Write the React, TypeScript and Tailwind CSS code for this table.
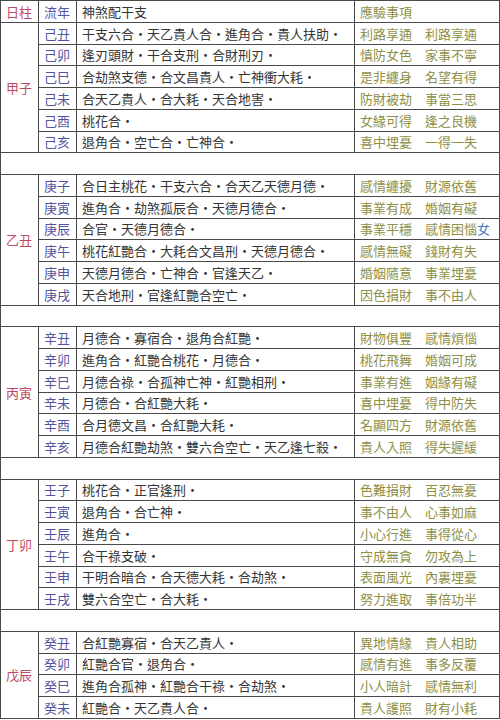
import React from 'react'

type Row = { year: string; shensha: string; result: React.ReactNode }
type Block = { pillar: string; rows: Row[] }

const blocks: Block[] = [
  {
    pillar: '甲子',
    rows: [
      { year: '己丑', shensha: '干支六合・天乙貴人合・進角合・貴人扶助・', result: '利路享通　利路享通' },
      { year: '己卯', shensha: '逢刃頭財・干合支刑・合財刑刃・', result: '慎防女色　家事不寧' },
      { year: '己巳', shensha: '合劫煞支德・合文昌貴人・亡神衝大耗・', result: '是非纏身　名望有得' },
      { year: '己未', shensha: '合天乙貴人・合大耗・天合地害・', result: '防財被劫　事當三思' },
      { year: '己酉', shensha: '桃花合・', result: '女緣可得　逢之良機' },
      { year: '己亥', shensha: '退角合・空亡合・亡神合・', result: '喜中埋憂　一得一失' },
    ],
  },
  {
    pillar: '乙丑',
    rows: [
      { year: '庚子', shensha: '合日主桃花・干支六合・合天乙天德月德・', result: '感情纏擾　財源依舊' },
      { year: '庚寅', shensha: '進角合・劫煞孤辰合・天德月德合・', result: '事業有成　婚姻有礙' },
      {
        year: '庚辰',
        shensha: '合官・天德月德合・',
        result: (
          <>
            事業平穩　感情困惱<span className="text-[#4a78b8]">女</span>
          </>
        ),
      },
      { year: '庚午', shensha: '桃花紅艷合・大耗合文昌刑・天德月德合・', result: '感情無礙　錢財有失' },
      { year: '庚申', shensha: '天德月德合・亡神合・官逢天乙・', result: '婚姻隨意　事業埋憂' },
      { year: '庚戌', shensha: '天合地刑・官逢紅艷合空亡・', result: '因色損財　事不由人' },
    ],
  },
  {
    pillar: '丙寅',
    rows: [
      { year: '辛丑', shensha: '月德合・寡宿合・退角合紅艷・', result: '財物俱豐　感情煩惱' },
      { year: '辛卯', shensha: '進角合・紅艷合桃花・月德合・', result: '桃花飛舞　婚姻可成' },
      { year: '辛巳', shensha: '月德合祿・合孤神亡神・紅艷相刑・', result: '事業有進　姻緣有礙' },
      { year: '辛未', shensha: '月德合・合紅艷大耗・', result: '喜中埋憂　得中防失' },
      { year: '辛酉', shensha: '合月德文昌・合紅艷大耗・', result: '名顯四方　財源依舊' },
      { year: '辛亥', shensha: '月德合紅艷劫煞・雙六合空亡・天乙逢七殺・', result: '貴人入照　得失遲緩' },
    ],
  },
  {
    pillar: '丁卯',
    rows: [
      { year: '壬子', shensha: '桃花合・正官逢刑・', result: '色難損財　百忍無憂' },
      { year: '壬寅', shensha: '退角合・合亡神・', result: '事不由人　心事如麻' },
      { year: '壬辰', shensha: '進角合・', result: '小心行進　事得從心' },
      { year: '壬午', shensha: '合干祿支破・', result: '守成無貪　勿攻為上' },
      { year: '壬申', shensha: '干明合暗合・合天德大耗・合劫煞・', result: '表面風光　內裏埋憂' },
      { year: '壬戌', shensha: '雙六合空亡・合大耗・', result: '努力進取　事倍功半' },
    ],
  },
  {
    pillar: '戊辰',
    rows: [
      { year: '癸丑', shensha: '合紅艷寡宿・合天乙貴人・', result: '異地情緣　貴人相助' },
      { year: '癸卯', shensha: '紅艷合官・退角合・', result: '感情有進　事多反覆' },
      { year: '癸巳', shensha: '進角合孤神・紅艷合干祿・合劫煞・', result: '小人暗計　感情無利' },
      { year: '癸未', shensha: '紅艷合・天乙貴人合・', result: '貴人護照　財有小耗' },
    ],
  },
]

const cell = 'border border-[#4a4a4a] px-[5px] py-0 whitespace-nowrap align-middle'

export default function App() {
  return (
    <div className="w-[500px] bg-white" style={{ fontFamily: '"Noto Sans CJK TC", "Noto Sans", sans-serif' }}>
      <table className="w-[499px] table-fixed border-collapse text-[13px] leading-none text-[#353535]">
        <colgroup>
          <col className="w-[38px]" />
          <col className="w-[38px]" />
          <col className="w-[278px]" />
          <col className="w-[145px]" />
        </colgroup>
        <tbody>
          <tr className="h-[21.75px]">
            <td className={`${cell} text-[#bd4a64]`}>日柱</td>
            <td className={`${cell} text-[#5353a0]`}>流年</td>
            <td className={cell}>神煞配干支</td>
            <td className={`${cell} text-[#8f8f45]`}>應驗事項</td>
          </tr>
          {blocks.map((b, bi) => (
            <React.Fragment key={b.pillar}>
              {bi > 0 && (
                <tr className="h-[21.75px]">
                  <td colSpan={4} className="border border-[#4a4a4a]" />
                </tr>
              )}
              {b.rows.map((r, ri) => (
                <tr key={r.year} className="h-[21.75px]">
                  {ri === 0 && (
                    <td rowSpan={b.rows.length} className={`${cell} text-[#bd4a64]`}>
                      {b.pillar}
                    </td>
                  )}
                  <td className={`${cell} text-[#5353a0]`}>{r.year}</td>
                  <td className={cell}>{r.shensha}</td>
                  <td className={`${cell} text-[#8f8f45]`}>{r.result}</td>
                </tr>
              ))}
            </React.Fragment>
          ))}
        </tbody>
      </table>
    </div>
  )
}
